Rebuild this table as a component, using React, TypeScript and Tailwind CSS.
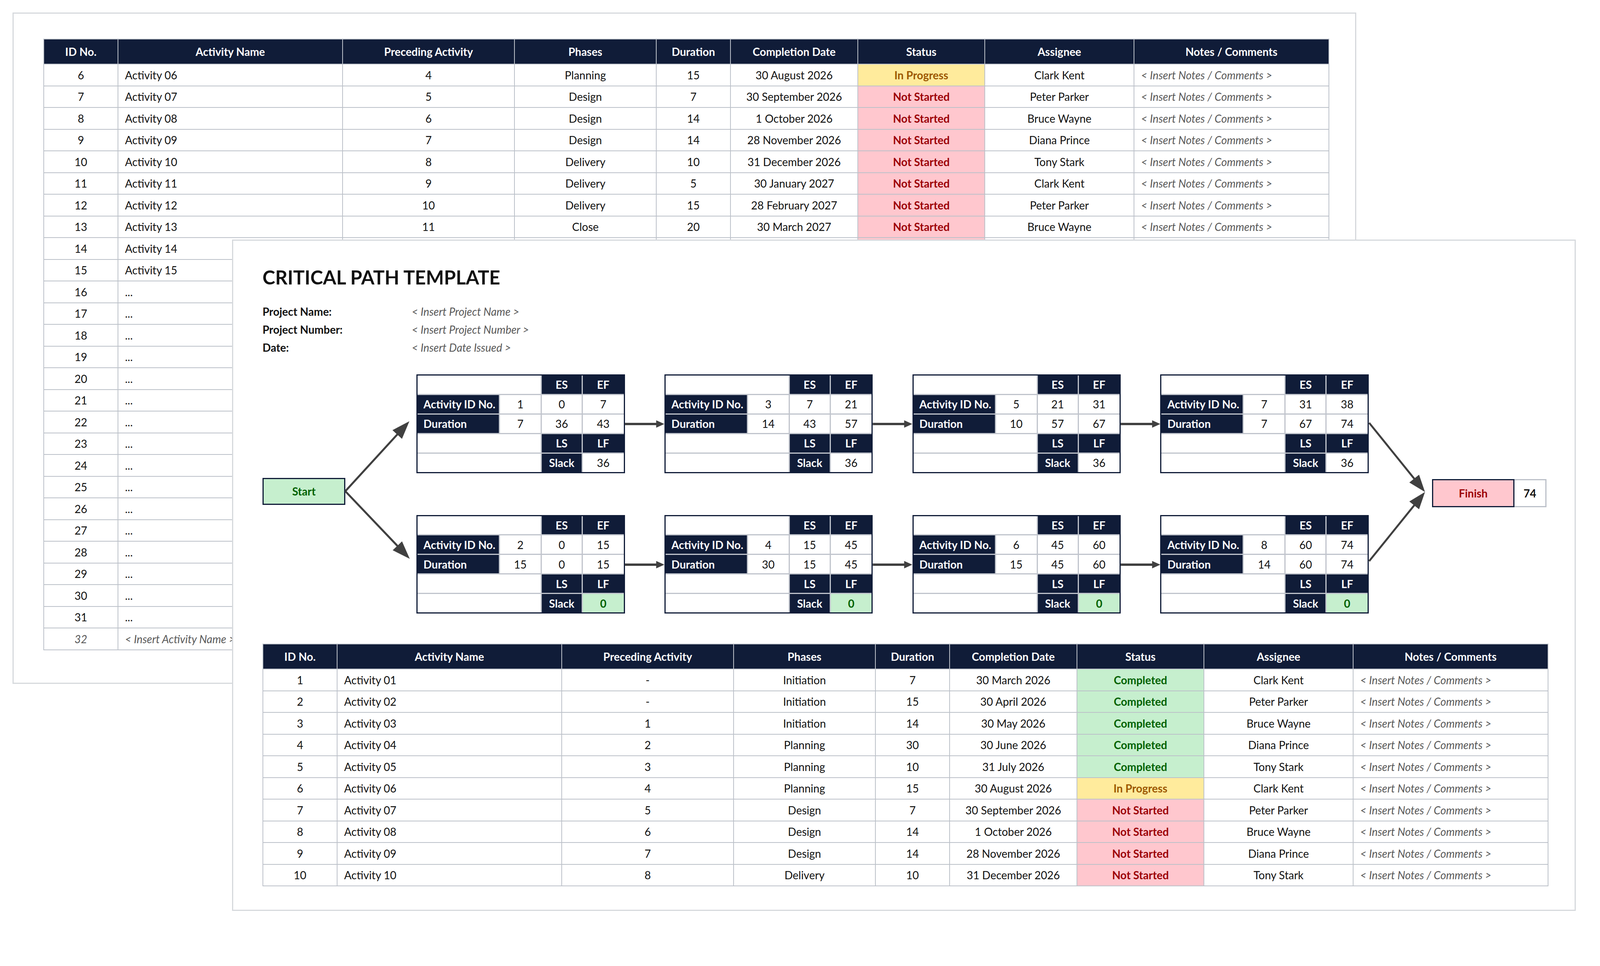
import React from "react";

type Status = "Completed" | "In Progress" | "Not Started";

interface ActivityRow {
  id: string;
  name: string;
  pre: string;
  phase: string;
  dur: string;
  date: string;
  status?: Status;
  statusLabel?: boolean;
  who: string;
  notes: boolean;
  placeholder?: boolean;
}

interface NodeData {
  id: number;
  dur: number;
  es: number;
  ef: number;
  ls: number;
  lf: number;
  slack: number;
}

const statusClass: Record<Status, string> = {
  Completed: "bg-[#c6efce] text-[#006100]",
  "In Progress": "bg-[#ffeb9c] text-[#9c5700]",
  "Not Started": "bg-[#ffc7ce] text-[#9c0006]",
};

const headers = [
  "ID No.",
  "Activity Name",
  "Preceding Activity",
  "Phases",
  "Duration",
  "Completion Date",
  "Status",
  "Assignee",
  "Notes / Comments",
];

const r = (
  id: number,
  pre: string,
  phase: string,
  dur: string,
  date: string,
  status: Status,
  who: string,
): ActivityRow => ({
  id: String(id),
  name: `Activity ${String(id).padStart(2, "0")}`,
  pre,
  phase,
  dur,
  date,
  status,
  statusLabel: true,
  who,
  notes: true,
});

const allRows: ActivityRow[] = [
  r(1, "-", "Initiation", "7", "30 March 2026", "Completed", "Clark Kent"),
  r(2, "-", "Initiation", "15", "30 April 2026", "Completed", "Peter Parker"),
  r(3, "1", "Initiation", "14", "30 May 2026", "Completed", "Bruce Wayne"),
  r(4, "2", "Planning", "30", "30 June 2026", "Completed", "Diana Prince"),
  r(5, "3", "Planning", "10", "31 July 2026", "Completed", "Tony Stark"),
  r(6, "4", "Planning", "15", "30 August 2026", "In Progress", "Clark Kent"),
  r(7, "5", "Design", "7", "30 September 2026", "Not Started", "Peter Parker"),
  r(8, "6", "Design", "14", "1 October 2026", "Not Started", "Bruce Wayne"),
  r(9, "7", "Design", "14", "28 November 2026", "Not Started", "Diana Prince"),
  r(10, "8", "Delivery", "10", "31 December 2026", "Not Started", "Tony Stark"),
  r(11, "9", "Delivery", "5", "30 January 2027", "Not Started", "Clark Kent"),
  r(12, "10", "Delivery", "15", "28 February 2027", "Not Started", "Peter Parker"),
  r(13, "11", "Close", "20", "30 March 2027", "Not Started", "Bruce Wayne"),
];

// rows 14 and 15 sit mostly under the front sheet: only their name shows
const coveredRows: ActivityRow[] = [14, 15].map((id) => ({
  id: String(id),
  name: `Activity ${id}`,
  pre: "",
  phase: "",
  dur: "",
  date: "",
  status: "Not Started",
  who: "",
  notes: false,
}));

const emptyRows: ActivityRow[] = Array.from({ length: 16 }, (_, i) => ({
  id: String(16 + i),
  name: "...",
  pre: "",
  phase: "",
  dur: "",
  date: "",
  who: "",
  notes: false,
}));

const backRows: ActivityRow[] = [
  ...allRows.slice(5),
  ...coveredRows,
  ...emptyRows,
  {
    id: "32",
    name: "< Insert Activity Name >",
    pre: "",
    phase: "",
    dur: "",
    date: "",
    who: "",
    notes: false,
    placeholder: true,
  },
];

const frontRows = allRows.slice(0, 10);

const topNodes: NodeData[] = [
  { id: 1, dur: 7, es: 0, ef: 7, ls: 36, lf: 43, slack: 36 },
  { id: 3, dur: 14, es: 7, ef: 21, ls: 43, lf: 57, slack: 36 },
  { id: 5, dur: 10, es: 21, ef: 31, ls: 57, lf: 67, slack: 36 },
  { id: 7, dur: 7, es: 31, ef: 38, ls: 67, lf: 74, slack: 36 },
];

const bottomNodes: NodeData[] = [
  { id: 2, dur: 15, es: 0, ef: 15, ls: 0, lf: 15, slack: 0 },
  { id: 4, dur: 30, es: 15, ef: 45, ls: 15, lf: 45, slack: 0 },
  { id: 6, dur: 15, es: 45, ef: 60, ls: 45, lf: 60, slack: 0 },
  { id: 8, dur: 14, es: 60, ef: 74, ls: 60, lf: 74, slack: 0 },
];

function ActivityTable({ rows }: { rows: ActivityRow[] }) {
  const td = "border-2 border-[#bcc1c9] p-0 whitespace-nowrap overflow-hidden";
  return (
    <table className="w-[3290px] table-fixed border-collapse text-[28px] leading-none text-[#111]">
      <colgroup>
        <col className="w-[190px]" />
        <col className="w-[575px]" />
        <col className="w-[440px]" />
        <col className="w-[363px]" />
        <col className="w-[190px]" />
        <col className="w-[326px]" />
        <col className="w-[325px]" />
        <col className="w-[382px]" />
        <col className="w-[499px]" />
      </colgroup>
      <thead>
        <tr className="h-[64px] bg-[#101c38] text-white">
          {headers.map((h) => (
            <th key={h} className="border-2 border-[#bcc1c9] p-0 text-center font-bold">
              {h}
            </th>
          ))}
        </tr>
      </thead>
      <tbody>
        {rows.map((row) => (
          <tr key={row.id} className="h-[55.5px]">
            <td className={`${td} text-center ${row.placeholder ? "italic text-[#595959]" : ""}`}>{row.id}</td>
            <td className={`${td} pl-[17px] text-left ${row.placeholder ? "italic text-[#595959]" : ""}`}>
              {row.name}
            </td>
            <td className={`${td} text-center`}>{row.pre}</td>
            <td className={`${td} text-center`}>{row.phase}</td>
            <td className={`${td} text-center`}>{row.dur}</td>
            <td className={`${td} text-center`}>{row.date}</td>
            <td className={`${td} text-center font-bold ${row.status ? statusClass[row.status] : ""}`}>
              {row.statusLabel ? row.status : ""}
            </td>
            <td className={`${td} text-center`}>{row.who}</td>
            <td className={`${td} pl-[17px] text-left italic text-[#595959]`}>
              {row.notes ? "< Insert Notes / Comments >" : ""}
            </td>
          </tr>
        ))}
      </tbody>
    </table>
  );
}

function ActivityNode({ n, critical }: { n: NodeData; critical: boolean }) {
  const cell = "flex items-center justify-center bg-white";
  const head = "flex items-center justify-center bg-[#101c38] font-bold text-white";
  const label = "flex items-center bg-[#101c38] pl-[15px] font-bold text-white";
  return (
    <div className="grid h-[252.5px] w-[533.5px] grid-cols-[208px_104px_102px_1fr] grid-rows-5 gap-[3px] border-[3px] border-[#101c38] bg-[#c0c4cc] text-[28px] leading-none text-[#111]">
      <div className="col-span-2 bg-white" />
      <div className={head}>ES</div>
      <div className={head}>EF</div>
      <div className={label}>Activity ID No.</div>
      <div className={cell}>{n.id}</div>
      <div className={cell}>{n.es}</div>
      <div className={cell}>{n.ef}</div>
      <div className={label}>Duration</div>
      <div className={cell}>{n.dur}</div>
      <div className={cell}>{n.ls}</div>
      <div className={cell}>{n.lf}</div>
      <div className="col-span-2 bg-white" />
      <div className={head}>LS</div>
      <div className={head}>LF</div>
      <div className="col-span-2 bg-white" />
      <div className={head}>Slack</div>
      <div className={critical ? "flex items-center justify-center bg-[#c6efce] font-bold text-[#006100]" : cell}>
        {n.slack}
      </div>
    </div>
  );
}

interface ArrowProps {
  x1: number;
  y1: number;
  x2: number;
  y2: number;
  head?: number;
  spread?: number;
  stroke?: number;
}

function Arrow({ x1, y1, x2, y2, head = 46, spread = 33, stroke = 5 }: ArrowProps) {
  const dx = x2 - x1;
  const dy = y2 - y1;
  const len = Math.hypot(dx, dy);
  const ux = dx / len;
  const uy = dy / len;
  const bx = x2 - ux * head;
  const by = y2 - uy * head;
  const nx = (-uy * spread) / 2;
  const ny = (ux * spread) / 2;
  return (
    <g>
      <line x1={x1} y1={y1} x2={bx + ux * 2} y2={by + uy * 2} stroke="#404040" strokeWidth={stroke} />
      <polygon points={`${x2},${y2} ${bx + nx},${by + ny} ${bx - nx},${by - ny}`} fill="#404040" />
    </g>
  );
}

const nodeLefts = [394, 1028.8, 1663.6, 2298.4];
const nodeWidth = 533.5;

function Diagram() {
  return (
    <div className="relative mt-[46px] flex h-[612px] w-[3290px] items-center">
      <div className="mb-[14px] flex h-[69px] w-[212px] shrink-0 items-center justify-center border-[3px] border-[#101c38] bg-[#c6efce] text-[28px] font-bold text-[#006100]">
        Start
      </div>
      <div className="ml-[182px] grid shrink-0 grid-cols-[repeat(4,533.5px)] gap-x-[101.3px] gap-y-[107px]">
        {topNodes.map((n) => (
          <ActivityNode key={n.id} n={n} critical={false} />
        ))}
        {bottomNodes.map((n) => (
          <ActivityNode key={n.id} n={n} critical />
        ))}
      </div>
      <div className="mb-[5px] ml-[162px] flex h-[72px] shrink-0 text-[28px] font-bold">
        <div className="flex w-[211px] items-center justify-center border-[3px] border-[#101c38] bg-[#ffc7ce] text-[#9c0006]">
          Finish
        </div>
        <div className="flex w-[82px] items-center justify-center border-[3px] border-l-0 border-[#bcc1c9] bg-white text-[#111]">
          74
        </div>
      </div>
      <svg className="pointer-events-none absolute left-0 top-0" width={3290} height={612}>
        <Arrow x1={212} y1={299} x2={376} y2={120} />
        <Arrow x1={212} y1={299} x2={377} y2={472} />
        {[0, 1, 2].map((i) => (
          <React.Fragment key={i}>
            <Arrow x1={nodeLefts[i] + nodeWidth} y1={127} x2={nodeLefts[i + 1]} y2={127} head={21} spread={19} stroke={6} />
            <Arrow x1={nodeLefts[i] + nodeWidth} y1={487} x2={nodeLefts[i + 1]} y2={487} head={21} spread={19} stroke={6} />
          </React.Fragment>
        ))}
        <Arrow x1={2833} y1={124} x2={2976} y2={301} head={44} spread={32} />
        <Arrow x1={2833} y1={478} x2={2976} y2={301} head={44} spread={32} />
      </svg>
    </div>
  );
}

export default function App() {
  return (
    <div className="relative min-h-screen w-full overflow-hidden bg-white font-['Lato',sans-serif]">
      {/* sheet behind: the long activity list */}
      <div className="absolute left-[32px] top-[32px] h-[1718px] w-[3440px] overflow-hidden border-[3px] border-[#d6d9dd] bg-white pl-[76px] pt-[64px]">
        <ActivityTable rows={backRows} />
      </div>

      {/* sheet in front: the critical path template */}
      <div className="absolute left-[594px] top-[613px] h-[1718px] w-[3440px] overflow-hidden border-[3px] border-[#d6d9dd] bg-white pl-[75px]">
        <h1 className="mt-[69px] text-[49px] font-bold leading-none text-[#111]">CRITICAL PATH TEMPLATE</h1>
        <div className="mt-[40px] grid grid-cols-[382px_1fr] text-[28px] leading-[46px]">
          <span className="font-bold text-[#111]">Project Name:</span>
          <span className="italic text-[#595959]">&lt; Insert Project Name &gt;</span>
          <span className="font-bold text-[#111]">Project Number:</span>
          <span className="italic text-[#595959]">&lt; Insert Project Number &gt;</span>
          <span className="font-bold text-[#111]">Date:</span>
          <span className="italic text-[#595959]">&lt; Insert Date Issued &gt;</span>
        </div>
        <Diagram />
        <div className="mt-[77px]">
          <ActivityTable rows={frontRows} />
        </div>
      </div>
    </div>
  );
}
